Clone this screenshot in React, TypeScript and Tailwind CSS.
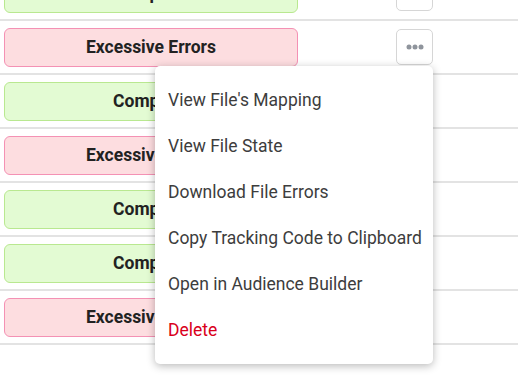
const rows = [
  { label: 'Complete', ok: true },
  { label: 'Excessive Errors', ok: false },
  { label: 'Complete', ok: true },
  { label: 'Excessive Errors', ok: false },
  { label: 'Complete', ok: true },
  { label: 'Complete', ok: true },
  { label: 'Excessive Errors', ok: false },
];

const menuItems = [
  "View File's Mapping",
  'View File State',
  'Download File Errors',
  'Copy Tracking Code to Clipboard',
  'Open in Audience Builder',
];

function Dots() {
  return (
    <svg width="18" height="6" viewBox="0 0 18 6">
      <circle cx="3" cy="3" r="2.5" fill="#8f949c" />
      <circle cx="9" cy="3" r="2.5" fill="#8f949c" />
      <circle cx="15" cy="3" r="2.5" fill="#8f949c" />
    </svg>
  );
}

export default function App() {
  return (
    <div
      className="relative w-[518px] h-[375px] overflow-hidden bg-white"
      style={{ fontFamily: 'Roboto, "Liberation Sans", sans-serif' }}
    >
      <div className="-mt-[33px]">
        {rows.map((row, i) => (
          <div key={i} className="flex items-center h-[54px] border-b-2 border-[#e3e3e3] pl-1">
            <div
              className={
                row.ok
                  ? 'w-[294px] h-[39px] pt-px flex items-center justify-center rounded-[6px] border border-[#b9e890] bg-[#e3fbd3] text-[17.5px] font-bold text-[#222]'
                  : 'w-[294px] h-[39px] pt-px flex items-center justify-center rounded-[6px] border border-[#f491b4] bg-[#fddde0] text-[17.5px] font-bold text-[#222]'
              }
            >
              {row.label}
            </div>
            <button className="ml-[98px] w-[37px] h-[36px] flex items-center justify-center rounded-[5px] border border-[#d6d6d6] bg-white">
              <Dots />
            </button>
          </div>
        ))}
      </div>

      {/* Dropdown menu */}
      <div className="absolute left-[155px] top-[66px] w-[278px] bg-white rounded-[5px] py-[11px] shadow-[0_2px_8px_rgba(0,0,0,0.28)]">
        {menuItems.map((item) => (
          <div key={item} className="h-[46px] flex items-center pl-[13px] text-[17.5px] text-[#3d3d3d]">
            {item}
          </div>
        ))}
        <div className="h-[46px] flex items-center pl-[13px] text-[17.5px] text-[#d9001b]">Delete</div>
      </div>
    </div>
  );
}
